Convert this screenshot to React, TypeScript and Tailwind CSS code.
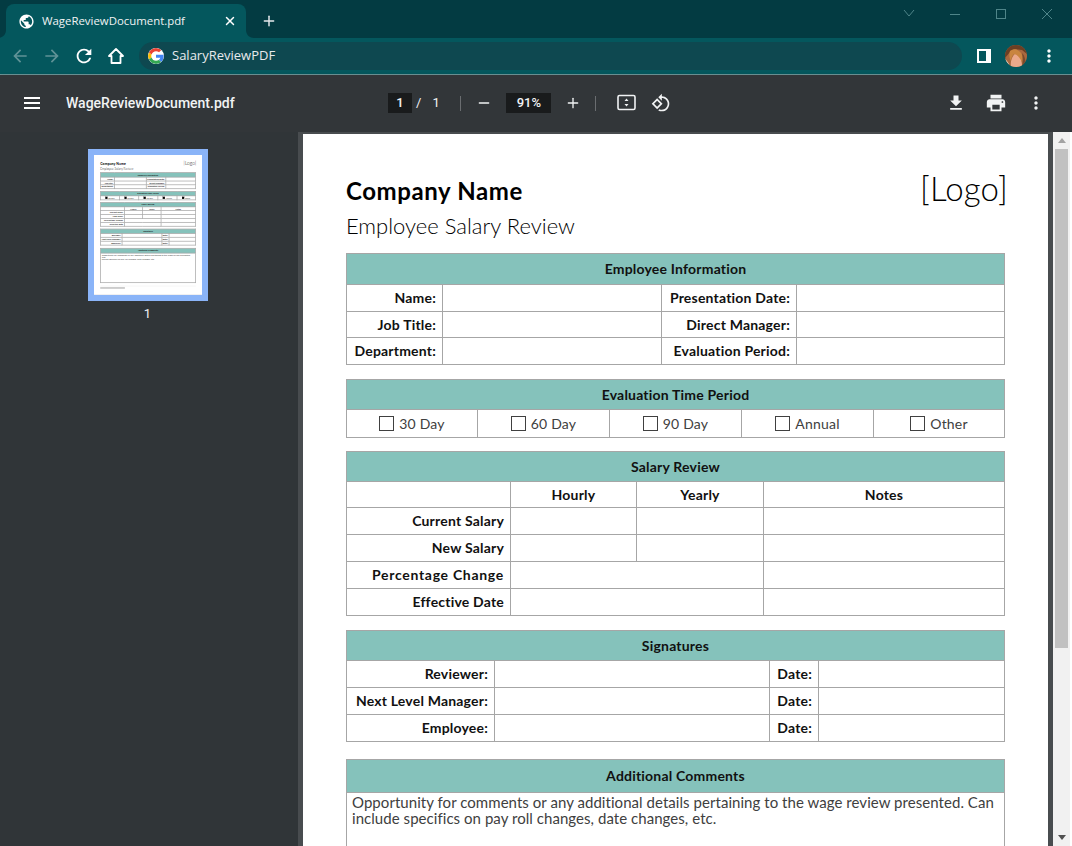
import { Minus, Plus, X } from "lucide-react";

const paths = {
  globe:
    "M12 2C6.48 2 2 6.48 2 12s4.48 10 10 10 10-4.48 10-10S17.52 2 12 2zm-1 17.93c-3.95-.49-7-3.85-7-7.93 0-.62.08-1.21.21-1.79L9 15v1c0 1.1.9 2 2 2v1.93zm6.9-2.54c-.26-.81-1-1.39-1.9-1.39h-1v-3c0-.55-.45-1-1-1H8v-2h2c.55 0 1-.45 1-1V7h2c1.1 0 2-.9 2-2v-.41c2.93 1.19 5 4.06 5 7.41 0 2.08-.8 3.97-2.1 5.39z",
  back: "M20 11H7.83l5.59-5.59L12 4l-8 8 8 8 1.41-1.41L7.83 13H20v-2z",
  forward: "M12 4l-1.41 1.41L16.17 11H4v2h12.17l-5.58 5.59L12 20l8-8z",
  reload:
    "M17.65 6.35C16.2 4.9 14.21 4 12 4c-4.42 0-7.99 3.58-7.99 8s3.57 8 7.99 8c3.73 0 6.84-2.55 7.73-6h-2.08c-.82 2.33-3.04 4-5.65 4-3.31 0-6-2.69-6-6s2.69-6 6-6c1.66 0 3.14.69 4.22 1.78L13 11h7V4l-2.35 2.35z",
  dots: "M12 8c1.1 0 2-.9 2-2s-.9-2-2-2-2 .9-2 2 .9 2 2 2zm0 2c-1.1 0-2 .9-2 2s.9 2 2 2 2-.9 2-2-.9-2-2-2zm0 6c-1.1 0-2 .9-2 2s.9 2 2 2 2-.9 2-2-.9-2-2-2z",
  download: "M19 9h-4V3H9v6H5l7 7 7-7zM5 18v2h14v-2H5z",
  print:
    "M19 8H5c-1.66 0-3 1.34-3 3v6h4v4h12v-4h4v-6c0-1.66-1.34-3-3-3zm-3 11H8v-5h8v5zm3-7c-.55 0-1-.45-1-1s.45-1 1-1 1 .45 1 1-.45 1-1 1zm-1-9H6v4h12V3z",
  rotate:
    "M7.34 6.41L.86 12.9l6.49 6.48 6.49-6.48-6.5-6.49zM3.69 12.9l3.66-3.66L11 12.9l-3.66 3.66-3.65-3.66zm15.67-6.26C17.61 4.88 15.3 4 13 4V.76L8.76 5 13 9.24V6c1.79 0 3.58.68 4.95 2.05 2.73 2.73 2.73 7.17 0 9.9C16.58 19.32 14.79 20 13 20c-.97 0-1.94-.21-2.84-.61l-1.49 1.49C10.02 21.62 11.51 22 13 22c2.3 0 4.61-.88 6.36-2.64 3.52-3.51 3.52-9.21 0-12.72z",
};

const Icon = ({ d, size = 24, className = "" }: { d: string; size?: number; className?: string }) => (
  <svg width={size} height={size} viewBox="0 0 24 24" fill="currentColor" className={`shrink-0 ${className}`}>
    <path d={d} />
  </svg>
);

const GoogleLogo = () => (
  <svg width="16" height="16" viewBox="0 0 48 48" className="shrink-0 rounded-full bg-white">
    <path fill="#EA4335" d="M24 9.5c3.5 0 6.7 1.2 9.2 3.6l6.9-6.9C35.9 2.4 30.5 0 24 0 14.6 0 6.5 5.4 2.6 13.2l8 6.2C12.5 13.6 17.8 9.5 24 9.5z" />
    <path fill="#4285F4" d="M47 24.5c0-1.6-.1-3.1-.4-4.5H24v9h12.9c-.6 3-2.2 5.5-4.7 7.2l7.7 6C44.4 37.9 47 31.800 47 24.5z" />
    <path fill="#FBBC05" d="M10.600 28.600c-.5-1.400-.8-3-.8-4.600s.3-3.200.8-4.600l-8-6.200C.9 16.500 0 20.100 0 24s.9 7.500 2.600 10.800l8-6.200z" />
    <path fill="#34A853" d="M24 48c6.500 0 11.900-2.100 15.900-5.800l-7.700-6c-2.100 1.400-4.900 2.300-8.200 2.300-6.200 0-11.500-4.100-13.400-9.900l-8 6.200C6.500 42.600 14.600 48 24 48z" />
  </svg>
);

const Avatar = () => (
  <svg width="22" height="22" viewBox="0 0 22 22" className="shrink-0">
    <defs>
      <clipPath id="avatar-clip">
        <circle cx="11" cy="11" r="11" />
      </clipPath>
    </defs>
    <g clipPath="url(#avatar-clip)">
      <rect width="22" height="22" fill="#a9683f" />
      <path d="M0 0h22v9l-5-4-7-1-5 3-5 6z" fill="#6b3f24" />
      <path d="M6 22c-1-6 1-11 5-14 4 2 6 7 6 14z" fill="#eba98b" />
      <path d="M5 6c4-3 8-2 11 2 2 3 2 6 1 9-2-4-4-7-8-8-2 2-3 4-3 7-2-3-2-7-1-10z" fill="#c9853f" />
      <path d="M17 8c3 3 4 8 3 14h-3c1-5 1-9 0-14z" fill="#7a4a2b" />
      <path d="M0 14c2 2 4 4 5 8H0z" fill="#f5e6d8" />
    </g>
  </svg>
);

const SidePanelIcon = () => (
  <svg width="14" height="14" viewBox="0 0 14 14" className="shrink-0">
    <rect width="14" height="14" fill="#ffffff" />
    <rect x="2" y="2" width="7" height="10" fill="#04575d" />
  </svg>
);

const FitIcon = () => (
  <svg width="20" height="18" viewBox="0 0 20 18" fill="none" className="shrink-0">
    <rect x="1" y="1.500" width="17" height="14" rx="1.500" stroke="#f1f3f4" strokeWidth="1.600" />
    <path d="M9.500 4.500l2 2.500h-4zM9.500 12.500l2-2.500h-4z" fill="#f1f3f4" />
  </svg>
);

const WindowControls = () => (
  <div className="ml-auto flex items-center text-[#4f8589]">
    <svg width="46" height="20" viewBox="0 0 46 20" fill="none" stroke="currentColor">
      <path d="M18 6l5 6 5-6" />
    </svg>
    <svg width="46" height="20" viewBox="0 0 46 20" fill="none" stroke="currentColor">
      <path d="M18 10.500h10" />
    </svg>
    <svg width="46" height="20" viewBox="0 0 46 20" fill="none" stroke="currentColor">
      <rect x="18.500" y="5.500" width="9" height="9" />
    </svg>
    <svg width="46" height="20" viewBox="0 0 46 20" fill="none" stroke="currentColor" className="mr-[2px]">
      <path d="M18 5l10 10M28 5L18 15" />
    </svg>
  </div>
);

const TabStrip = () => (
  <div className="flex h-[38px] items-start bg-[#033b42] pt-1 font-['Open_Sans',sans-serif]">
    <div className="relative ml-[6px] flex h-[34px] w-[240px] items-center rounded-t-lg bg-[#04575d] pl-3 text-white">
      <svg width="8" height="8" viewBox="0 0 8 8" className="absolute bottom-0 -left-2 text-[#04575d]" fill="currentColor">
        <path d="M8 0v8H0c4 0 8-3 8-8z" />
      </svg>
      <svg width="8" height="8" viewBox="0 0 8 8" className="absolute -right-2 bottom-0 text-[#04575d]" fill="currentColor">
        <path d="M0 0v8h8C4 8 0 5 0 0z" />
      </svg>
      <Icon d={paths.globe} size={17} />
      <span className="ml-[7px] text-[11.4px] text-[#f1f3f4]">WageReviewDocument.pdf</span>
      <X size={14} strokeWidth={2.500} className="ml-auto mr-[9px]" />
    </div>
    <div className="ml-[15px] flex h-[34px] items-center">
      <Plus size={16} strokeWidth={2.200} className="text-[#e8eaed]" />
    </div>
    <WindowControls />
  </div>
);

const AddressBar = () => (
  <div className="flex h-[37px] items-center border-b border-[#6f9a9c] bg-[#04575d] font-['Open_Sans',sans-serif]">
    <Icon d={paths.back} size={20} className="ml-[10px] text-[#5f9296]" />
    <Icon d={paths.forward} size={20} className="ml-3 text-[#5f9296]" />
    <Icon d={paths.reload} size={22} className="ml-[11px] text-white" />
    <svg width="18" height="18" viewBox="0 0 18 18" fill="none" stroke="#ffffff" strokeWidth="1.800" className="ml-[12px] shrink-0">
      <path d="M9 2L2 9h2.500v7h9V9H16z" strokeLinejoin="round" />
    </svg>
    <div className="ml-[14px] flex h-7 w-[823px] items-center rounded-full bg-[#0e4850] pl-[9px]">
      <GoogleLogo />
      <span className="ml-2 text-[13px] text-[#e8eaed]">SalaryReviewPDF</span>
    </div>
    <div className="ml-[15px]">
      <SidePanelIcon />
    </div>
    <div className="ml-[14px]">
      <Avatar />
    </div>
    <Icon d={paths.dots} size={20} className="ml-[12px] text-white" />
  </div>
);

const Divider = () => <div className="h-[15px] w-px bg-[#6a6d70]" />;

const PdfToolbar = () => (
  <div className="flex h-[57px] shrink-0 items-center bg-[#323639] pb-px font-['Roboto',sans-serif] text-[#f1f3f4] shadow-[0_1px_3px_rgba(0,0,0,0.4)]">
    <div className="ml-6 flex h-[12px] w-4 flex-col justify-between">
      <div className="h-0.5 bg-white" />
      <div className="h-0.5 bg-white" />
      <div className="h-0.5 bg-white" />
    </div>
    <span className="ml-[26px] w-[322px] text-sm font-medium">WageReviewDocument.pdf</span>
    <div className="flex h-5 w-6 items-center justify-center bg-[#191b1c] text-[13px] font-medium">1</div>
    <span className="ml-1 text-[13px]">/</span>
    <span className="ml-[11px] w-[28px] text-[13px]">1</span>
    <Divider />
    <Minus size={16} strokeWidth={2} className="ml-[15px]" />
    <div className="ml-[14px] flex h-5 w-[45px] items-center justify-center bg-[#191b1c] text-[13px] font-medium">91%</div>
    <Plus size={16} strokeWidth={2} className="ml-[14px]" />
    <div className="ml-[14px]">
      <Divider />
    </div>
    <div className="ml-[21px]">
      <FitIcon />
    </div>
    <Icon d={paths.rotate} size={20} className="ml-[14px]" />
    <Icon d={paths.download} size={20} className="ml-[275px]" />
    <Icon d={paths.print} size={22} className="ml-[19px]" />
    <Icon d={paths.dots} size={20} className="ml-[19px]" />
  </div>
);

const Checkbox = ({ label }: { label: string }) => (
  <td className="border border-[#a6a6a6] p-0">
    <div className="flex items-center justify-center gap-[5px] text-sm text-[#404040]">
      <span className="doc-check h-[15px] w-[15px] border border-[#404040]" />
      {label}
    </div>
  </td>
);

const Head = ({ title, span, tall = false }: { title: string; span: number; tall?: boolean }) => (
  <tr className={tall ? "h-[31px]" : "h-[30px]"}>
    <th colSpan={span} className="border border-[#a6a6a6] bg-[#85c2bb] p-0 text-center text-sm font-bold text-[#111111]">
      {title}
    </th>
  </tr>
);

const Label = ({ children, className = "" }: { children: string; className?: string }) => (
  <td className={`border border-[#a6a6a6] p-0 pr-[6px] text-right text-sm font-bold text-[#111111] ${className}`}>{children}</td>
);

const Blank = ({ span = 1 }: { span?: number }) => <td colSpan={span} className="border border-[#a6a6a6] p-0" />;

const ColHead = ({ children }: { children: string }) => (
  <td className="border border-[#a6a6a6] p-0 text-center text-sm font-bold text-[#111111]">{children}</td>
);

const employeeRows = [
  { left: "Name:", right: "Presentation Date:", height: "h-[27px]" },
  { left: "Job Title:", right: "Direct Manager:", height: "h-[26px]" },
  { left: "Department:", right: "Evaluation Period:", height: "h-[27px]" },
];

const signatureRows = ["Reviewer:", "Next Level Manager:", "Employee:"];

const DocPage = () => (
  <div className="h-[965px] w-[745px] bg-white pr-[43px] pl-[43px] font-['Lato',sans-serif] tracking-[0.2px] text-black">
    <div className="flex items-start justify-between pt-[39px] pb-[12px]">
      <div>
        <div className="h-[36px] text-[24px] leading-[36px] font-bold tracking-[0.6px]">Company Name</div>
        <div className="mt-[2px] h-[30px] text-[22px] leading-[30px] font-light tracking-[0px] text-black">Employee Salary Review</div>
      </div>
      <div className="mr-[-3px] mt-[-5px] text-[33px] leading-[40px] font-light text-black">[Logo]</div>
    </div>

    <table className="w-[659px] table-fixed border-collapse">
      <colgroup>
        <col className="w-[96px]" />
        <col className="w-[219px]" />
        <col className="w-[135px]" />
        <col />
      </colgroup>
      <tbody>
        <Head title="Employee Information" span={4} tall />
        {employeeRows.map((row) => (
          <tr key={row.left} className={row.height}>
            <Label>{row.left}</Label>
            <Blank />
            <Label>{row.right}</Label>
            <Blank />
          </tr>
        ))}
      </tbody>
    </table>

    <table className="mt-[14px] w-[659px] table-fixed border-collapse">
      <colgroup>
        <col className="w-[131px]" />
        <col className="w-[132px]" />
        <col className="w-[132px]" />
        <col className="w-[132px]" />
        <col />
      </colgroup>
      <tbody>
        <Head title="Evaluation Time Period" span={5} />
        <tr className="h-[28px]">
          {["30 Day", "60 Day", "90 Day", "Annual", "Other"].map((item) => (
            <Checkbox key={item} label={item} />
          ))}
        </tr>
      </tbody>
    </table>

    <table className="mt-[13px] w-[659px] table-fixed border-collapse">
      <colgroup>
        <col className="w-[164px]" />
        <col className="w-[126px]" />
        <col className="w-[127px]" />
        <col />
      </colgroup>
      <tbody>
        <Head title="Salary Review" span={4} />
        <tr className="h-[26px]">
          <Blank />
          <ColHead>Hourly</ColHead>
          <ColHead>Yearly</ColHead>
          <ColHead>Notes</ColHead>
        </tr>
        {["Current Salary", "New Salary"].map((row) => (
          <tr key={row} className="h-[27px]">
            <Label>{row}</Label>
            <Blank />
            <Blank />
            <Blank />
          </tr>
        ))}
        <tr className="h-[27px]">
          <Label className="tracking-[0.7px]">Percentage Change</Label>
          <Blank span={2} />
          <Blank />
        </tr>
        <tr className="h-[27px]">
          <Label>Effective Date</Label>
          <Blank span={2} />
          <Blank />
        </tr>
      </tbody>
    </table>

    <table className="mt-[14px] w-[659px] table-fixed border-collapse">
      <colgroup>
        <col className="w-[148px]" />
        <col className="w-[275px]" />
        <col className="w-[49px]" />
        <col />
      </colgroup>
      <tbody>
        <Head title="Signatures" span={4} />
        {signatureRows.map((row) => (
          <tr key={row} className="h-[27px]">
            <Label>{row}</Label>
            <Blank />
            <Label>Date:</Label>
            <Blank />
          </tr>
        ))}
      </tbody>
    </table>

    <table className="mt-[17px] w-[659px] table-fixed border-collapse">
      <tbody>
        <tr className="h-[33px]">
          <th className="border border-[#a6a6a6] bg-[#85c2bb] p-0 text-center text-sm font-bold text-[#111111]">Additional Comments</th>
        </tr>
        <tr className="h-[204px]">
          <td className="border border-[#a6a6a6] px-[5px] pt-[1px] align-top text-[15px] leading-4 tracking-[0.05px] text-[#404040]">
            Opportunity for comments or any additional details pertaining to the wage review presented. Can
            <br />
            include specifics on pay roll changes, date changes, etc.
          </td>
        </tr>
      </tbody>
    </table>

    <div className="mt-5 border-t border-[#bfbfbf] pt-2">
      <div className="h-[10px] w-[170px] bg-[#bdbdbd]" />
    </div>
  </div>
);

const Sidebar = () => (
  <aside className="flex w-[298px] shrink-0 flex-col items-center bg-[#303538] pt-[17px] pr-[3px] font-['Roboto',sans-serif]">
    <div className="border-[6px] border-[#8ab4f8]">
      <div className="h-[140px] w-[108px] overflow-hidden [&_td]:border-[5px] [&_th]:border-[5px] [&_.doc-check]:bg-black">
        <div className="origin-top-left scale-[0.145]">
          <DocPage />
        </div>
      </div>
    </div>
    <span className="mt-[3px] text-[13px] text-[#f1f3f4]">1</span>
  </aside>
);

const Scrollbar = () => (
  <div className="flex w-[17px] shrink-0 flex-col items-center bg-[#f1f1f1]">
    <div className="flex h-[17px] w-full items-center justify-center">
      <div className="h-0 w-0 border-x-[4px] border-b-[5px] border-x-transparent border-b-[#a3a3a3]" />
    </div>
    <div className="h-[499px] w-[13px] bg-[#c1c1c1]" />
    <div className="mt-auto flex h-[17px] w-full items-center justify-center">
      <div className="h-0 w-0 border-x-[4px] border-t-[5px] border-x-transparent border-t-[#505050]" />
    </div>
  </div>
);

export default function App() {
  return (
    <div className="flex h-[846px] w-[1072px] flex-col overflow-hidden bg-[#323639]">
      <TabStrip />
      <AddressBar />
      <PdfToolbar />
      <div className="flex min-h-0 flex-1">
        <Sidebar />
        <div className="flex min-w-0 flex-1 overflow-hidden bg-[#484c4f] pl-[5px]">
          <div className="mt-[2px] w-[745px] shrink-0">
            <DocPage />
          </div>
          <div className="w-[5px] shrink-0" />
          <Scrollbar />
          <div className="w-[2px] shrink-0 bg-white" />
        </div>
      </div>
    </div>
  );
}
